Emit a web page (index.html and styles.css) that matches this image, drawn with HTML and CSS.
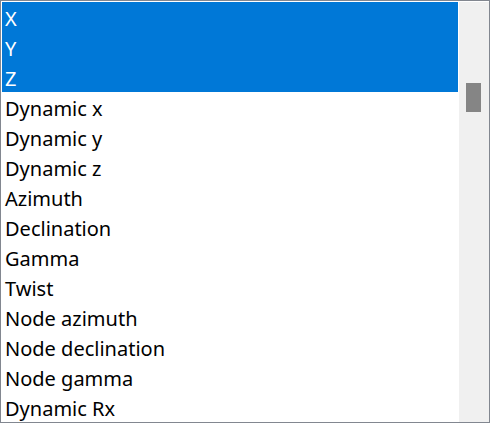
FILE: index.html
```html
<!DOCTYPE html>
<html lang="en">
<head>
  <meta charset="UTF-8" />
  <title>Channel list</title>
  <link rel="stylesheet" href="styles.css">
</head>
<body>

<div class="listbox">
  <ul class="items">
    <li class="selected">X</li>
    <li class="selected">Y</li>
    <li class="selected">Z</li>
    <li>Dynamic x</li>
    <li>Dynamic y</li>
    <li>Dynamic z</li>
    <li>Azimuth</li>
    <li>Declination</li>
    <li>Gamma</li>
    <li>Twist</li>
    <li>Node azimuth</li>
    <li>Node declination</li>
    <li>Node gamma</li>
    <li>Dynamic Rx</li>
  </ul>
  <div class="scrollbar">
    <div class="thumb"></div>
  </div>
</div>

</body>
</html>
```

FILE: styles.css
```css
body {
  margin: 0;
  background: #ffffff;
  font-family: 'Noto Sans', 'Open Sans', sans-serif;
}

.listbox {
  display: flex;
  width: 490px;
  height: 423px;
  box-sizing: border-box;
  border: 1px solid #828790;
  padding: 1px 0 0 1px;
  background: #ffffff;
  overflow: hidden;
}

.items {
  flex: 1;
  list-style: none;
  margin: 0;
  padding: 0;
}

.items li {
  height: 28px;
  padding-top: 2px;
  line-height: 30px;
  padding-left: 3px;
  font-size: 20px;
  color: #000000;
  white-space: nowrap;
}

.items li.selected {
  background: #0078d7;
  color: #ffffff;
}

.scrollbar {
  width: 30px;
  margin-left: 1px;
  background: #f0f0f0;
  padding-top: 81px;
  box-sizing: border-box;
}

.thumb {
  width: 15px;
  height: 29px;
  margin-left: 7px;
  background: #858585;
}
```
